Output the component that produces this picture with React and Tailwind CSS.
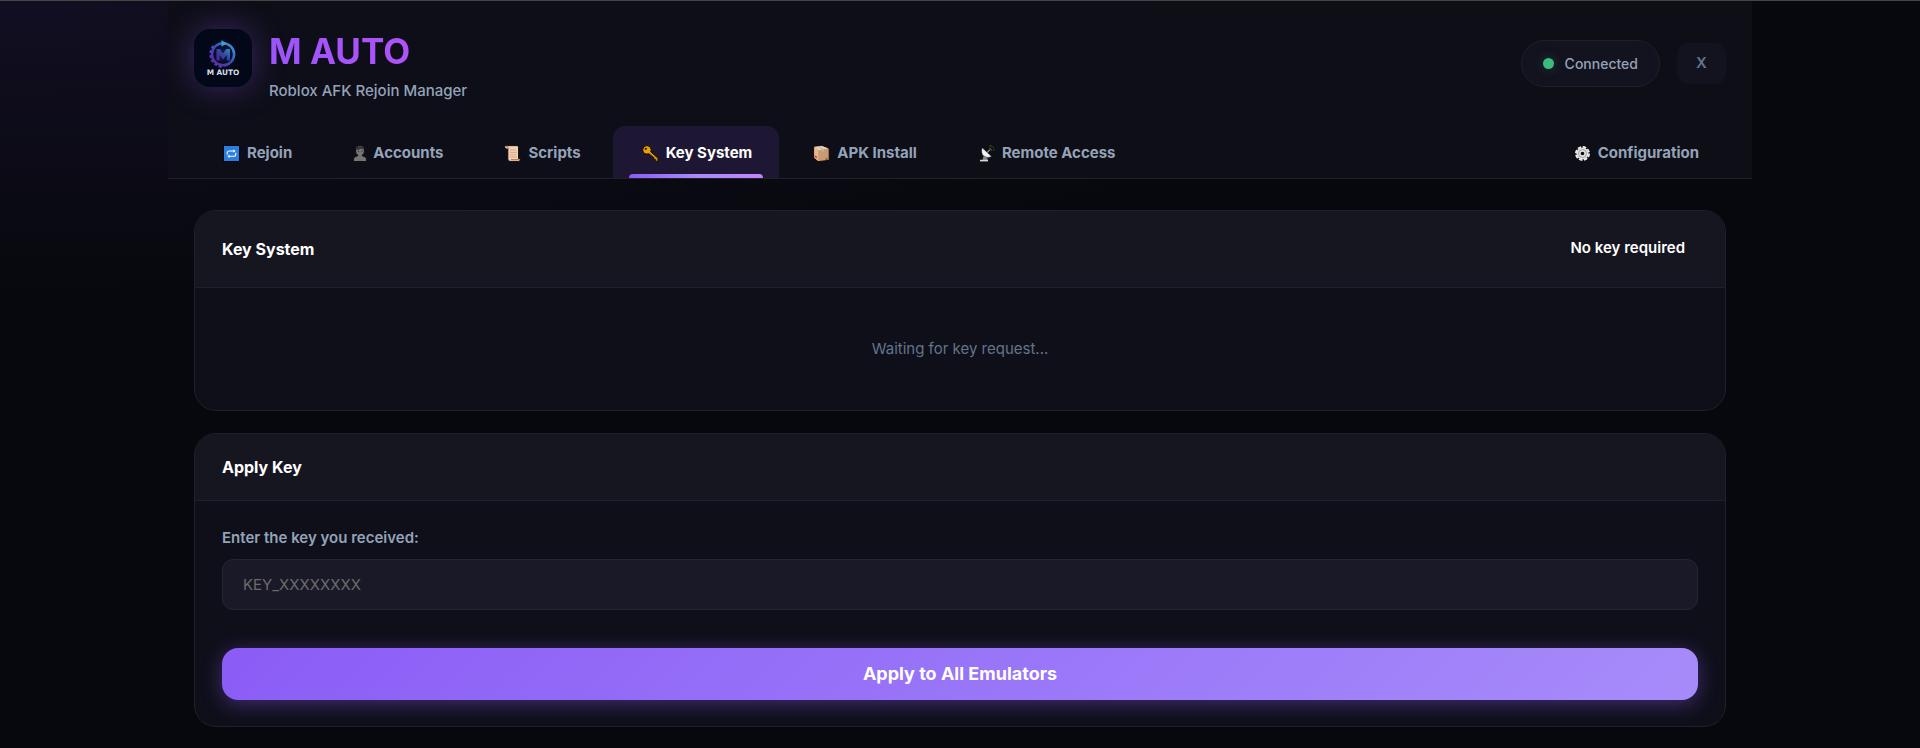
import React, { useState } from 'react';
import clsx from 'clsx';

const RejoinIcon = () => (
  <svg width="17" height="17" viewBox="0 0 17 17" className="shrink-0" aria-hidden="true">
    <rect width="17" height="17" rx="1" fill="#05070c" />
    <rect x="1" y="1" width="15" height="15" fill="#2b7de0" />
    <path d="M4.2 9.4V8Q4.2 6 6 6H11M12.8 7.8V9.2Q12.8 11.2 11 11.2H6" fill="none" stroke="#fff" strokeWidth="1.1" />
    <path d="M10.4 4.2 12.6 6 10.4 7.8zM6.6 9.4 4.4 11.2 6.6 13z" fill="#fff" />
  </svg>
);

const AccountsIcon = () => (
  <svg width="16" height="17" viewBox="0 0 16 17" className="shrink-0" aria-hidden="true">
    <path d="M1.5 16.5V14Q1.5 11.6 5 11L6 10.5Q3.2 8.6 3.4 5Q3.8 .6 8 .6Q12.2 .6 12.6 5Q12.8 8.6 10 10.5L11 11Q14.5 11.6 14.5 14V16.5Z" fill="#757575" stroke="#101010" />
    <path d="M4 5Q4.4 1.2 8 1.2Q11.6 1.2 12 5.4Q11 3.6 8.4 3.8Q6 5.4 4 5Z" fill="#343434" />
    <path d="M6 6.4h1M9.4 6.4h1" stroke="#2b2b2b" />
  </svg>
);

const ScriptsIcon = () => (
  <svg width="17" height="17" viewBox="0 0 17 17" className="shrink-0" aria-hidden="true">
    <path d="M.6 1.6Q1 .6 2.4.6H13Q14.6.6 14.6 2.4V13.6Q16.4 13.4 16.4 14.8Q16.2 16.4 14.4 16.4H6Q3.8 16.4 3.8 14V4H2Q.6 3.6.6 1.6Z" fill="#f3cfb5" stroke="#0b0b0d" />
    <path d="M2 1.4Q4.4 1.2 4.4 4M7 14.6H15.6" fill="none" stroke="#b5793f" />
    <path d="M6 5h6M6 7.4h7M6 9.8h6M6 12h7" stroke="#d3ab90" />
  </svg>
);

const KeyIcon = () => (
  <svg width="17" height="17" viewBox="0 0 17 17" className="shrink-0" aria-hidden="true">
    <path d="M4.8.6Q9 .8 9.2 4.6L8.8 6.8L16 13.2V16.2H13.4V14.6H11.8V12.8L7 8.8Q1 10 .7 4.8Q.8.8 4.8.6Z" fill="#e89f08" stroke="#120d08" />
    <circle cx="3.8" cy="3.8" r="1.1" fill="#1a1208" />
    <path d="m8 8.4 7 6.2" stroke="#b97605" strokeWidth="0.8" />
  </svg>
);

const PackageIcon = () => (
  <svg width="17" height="17" viewBox="0 0 17 17" className="shrink-0" aria-hidden="true">
    <path d="M.8 1.6 9 .6 16.2 3.4V15.4L5.2 16.6.8 13Z" fill="#c99b6f" stroke="#0c0a0a" />
    <path d="M1.2 1.8 9 1.1 15.6 3.6 5.2 5.2Z" fill="#ecd0b4" />
    <path d="M1.2 2 5.2 5.2V16L1.2 12.8Z" fill="#e2b890" />
    <path d="m6 1.4 5 2.8V7L9.2 6.6V4.6L4.6 1.6Z" fill="#b9b3ae" />
    <path d="M1.8 10.2 3.8 11.6V13.4L1.8 12Z" fill="#d8283c" />
    <path d="M12.6 13.4h2v1.4h-2z" fill="#6a4b30" />
  </svg>
);

const AntennaIcon = () => (
  <svg width="16" height="17" viewBox="0 0 16 17" className="shrink-0" aria-hidden="true">
    <path d="M5 9.4 8 10.6 8.6 15H3.4Z" fill="#8b8078" />
    <path d="M1 14.8H9V16.4H1z" fill="#d8d8d8" />
    <path d="M3.2 2.8Q1.4 8 4.6 11Q8.4 13.6 12.6 11.6Z" fill="#f0f2f4" stroke="#0b0b0d" strokeWidth="0.4" />
    <path d="m8 7.6 3-3" stroke="#e9ecef" />
    <path d="M10 3.2Q12.6 3 12.8 5.8M10.6.8Q15 .8 15 5.2" fill="none" stroke="#566a12" strokeDasharray="2 1" />
  </svg>
);

const GearIcon = () => (
  <svg width="17" height="17" viewBox="0 0 17 17" className="shrink-0" aria-hidden="true">
    <circle cx="8.5" cy="8.5" r="8" fill="#08080c" />
    <circle cx="8.5" cy="8.5" r="6.6" fill="none" stroke="#eeeeee" strokeWidth="1.8" strokeDasharray="3.6 1.584" />
    <circle cx="8.5" cy="8.5" r="6" fill="#e2e2e2" />
    <circle cx="8.5" cy="8.5" r="4" fill="none" stroke="#969696" strokeWidth="0.9" />
    <circle cx="8.5" cy="8.5" r="1.8" fill="#0a0a0c" />
  </svg>
);

const Logo = () => (
  <svg viewBox="0 0 58 58" className="size-[58px] rounded-2xl bg-[#020817] shadow-[0_0_32px_rgba(139,92,246,0.35)]" role="img" aria-label="M AUTO logo">
    <defs>
      <linearGradient id="gear" x1="1" y1="0" x2="0" y2="1">
        <stop offset="0" stopColor="#38a0dc" />
        <stop offset="0.5" stopColor="#3a4cae" />
        <stop offset="1" stopColor="#6a20aa" />
      </linearGradient>
      <radialGradient id="halo">
        <stop offset="0" stopColor="#1c2a7a" stopOpacity="0.7" />
        <stop offset="1" stopColor="#020817" stopOpacity="0" />
      </radialGradient>
    </defs>
    <circle cx="29" cy="25" r="18" fill="url(#halo)" />
    <circle cx="29" cy="25.2" r="11" fill="none" stroke="url(#gear)" strokeWidth="2.4" />
    <path d="M19.5 17A12.6 12.6 0 0 0 29 37.8" fill="none" stroke="url(#gear)" strokeWidth="2.4" strokeDasharray="3 1.8" />
    <path d="M38 17.5A12.4 12.4 0 0 1 30 37.6" fill="none" stroke="url(#gear)" strokeWidth="0.8" />
    <path d="m27.5 11 5 3.4-5 3.4z" fill="#3ba0dc" />
    <path d="M22.5 31.5V20H25.8L29 24.6 32.2 20H36V31.5H32.8V26L29 30.6 25.6 26V31.5Z" fill="url(#gear)" opacity="0.85" />
    <text x="29" y="45.6" textAnchor="middle" fill="#d8dde8" fontSize="7.4" fontWeight="700" fontFamily="'DejaVu Sans', sans-serif">M AUTO</text>
  </svg>
);

const tabs = [
  { id: 'rejoin', label: 'Rejoin', icon: <RejoinIcon /> },
  { id: 'accounts', label: 'Accounts', icon: <AccountsIcon />, iconClass: 'w-3.5 justify-start' },
  { id: 'scripts', label: 'Scripts', icon: <ScriptsIcon /> },
  { id: 'keys', label: 'Key System', icon: <KeyIcon /> },
  { id: 'apk', label: 'APK Install', icon: <PackageIcon /> },
  { id: 'remote', label: 'Remote Access', icon: <AntennaIcon /> },
  { id: 'config', label: 'Configuration', icon: <GearIcon />, tabClass: 'ml-auto' },
];

const Tab = ({ tab, active, onClick }) => (
  <button
    type="button"
    onClick={onClick}
    className={clsx(
      'relative flex h-[52px] items-center gap-[7px] rounded-t-xl pr-[27px] pl-7 pt-0.5 text-[15px] font-bold whitespace-nowrap',
      active ? 'bg-[#1e1733] text-white' : 'text-[#94a3b8]',
      tab.tabClass
    )}
  >
    <span className={clsx('flex shrink-0', tab.iconClass || 'w-[18px] justify-end')}>{tab.icon}</span>
    {tab.label}
    {active && (
      <span className="absolute inset-x-4 bottom-0 h-1 rounded-t bg-linear-to-r from-[#8b5cf6] via-[#a78bfa] to-[#c084fc]" />
    )}
  </button>
);

const Card = ({ children }) => (
  <section className="overflow-hidden rounded-[22px] border border-[#20202c] bg-[#0f0f1a]">{children}</section>
);

const App = () => {
  const [activeTab, setActiveTab] = useState('keys');
  const [keyValue, setKeyValue] = useState('');

  return (
    <div className="min-h-screen border-t border-[#454545] bg-[#07080d] bg-[radial-gradient(80%_40%_at_0%_0%,rgba(124,80,246,0.09),transparent)] font-['Inter',sans-serif] text-white">
      <div className="mx-auto max-w-[1584px]">
        <header className="border-b border-[#20212b] bg-[#0f0f18]/95 px-[26px] pt-7">
          <div className="flex items-start justify-between">
            <div className="flex items-start gap-[17px]">
              <Logo />
              <div>
                <h1 className="bg-linear-to-r from-[#9b55fb] to-[#b850f8] bg-clip-text text-[35px] leading-[44px] font-bold text-transparent">
                  M AUTO
                </h1>
                <p className="mt-2 text-[15px] leading-5 font-medium text-[#94a3b8]">Roblox AFK Rejoin Manager</p>
              </div>
            </div>
            <div className="mt-[11px] flex items-center gap-[17px]">
              <div className="flex h-[47px] items-center gap-[11px] rounded-full border border-[#20202c] bg-[#13121f] px-[21px] text-sm font-medium text-[#94a3b8]">
                <span className="size-[11px] rounded-full bg-[#3dba7d] shadow-[0_0_12px_rgba(52,211,153,0.25)]" />
                Connected
              </div>
              <button type="button" className="h-[41px] w-[49px] rounded-[11px] bg-[#13121f] text-[15px] font-semibold text-[#64748b]">
                X
              </button>
            </div>
          </div>
          <nav className="mt-[25px] flex gap-[5px]">
            {tabs.map((tab) => (
              <Tab key={tab.id} tab={tab} active={tab.id === activeTab} onClick={() => setActiveTab(tab.id)} />
            ))}
          </nav>
        </header>

        <main className="flex flex-col gap-[22px] px-[26px] pt-[31px] pb-5">
          {/* Key request status */}
          <Card>
            <div className="flex h-[77px] items-center justify-between border-b border-[#20202c] bg-[#161620] px-[27px]">
              <h2 className="text-base font-bold">Key System</h2>
              <span className="px-[13px] pb-0.5 text-[15px] font-semibold">No key required</span>
            </div>
            <p className="py-[49px] text-center text-[15px] leading-6 text-[#64748b]">Waiting for key request...</p>
          </Card>

          {/* Apply key form */}
          <Card>
            <div className="flex h-[67px] items-center border-b border-[#20202c] bg-[#161620] px-[27px]">
              <h2 className="text-base font-bold">Apply Key</h2>
            </div>
            <form className="px-[27px] pt-[27px] pb-[26px]" onSubmit={(e) => e.preventDefault()}>
              <label htmlFor="key" className="block text-[15px] leading-5 font-semibold text-[#94a3b8]">
                Enter the key you received:
              </label>
              <input
                id="key"
                type="text"
                value={keyValue}
                onChange={(e) => setKeyValue(e.target.value)}
                placeholder="KEY_XXXXXXXX"
                className="mt-[11px] block h-[51px] w-full rounded-[11px] border border-[#252533] bg-[#1a1927] px-5 text-[15px] outline-none placeholder:text-[#6b6b6b]"
              />
              <button
                type="submit"
                className="mt-[38px] h-[52px] w-full rounded-2xl bg-linear-135 from-[#8b5cf6] to-[#a78bfa] text-lg font-bold shadow-[0_4px_20px_rgba(139,92,246,0.4)]"
              >
                Apply to All Emulators
              </button>
            </form>
          </Card>
        </main>
      </div>
    </div>
  );
};

export default App;
